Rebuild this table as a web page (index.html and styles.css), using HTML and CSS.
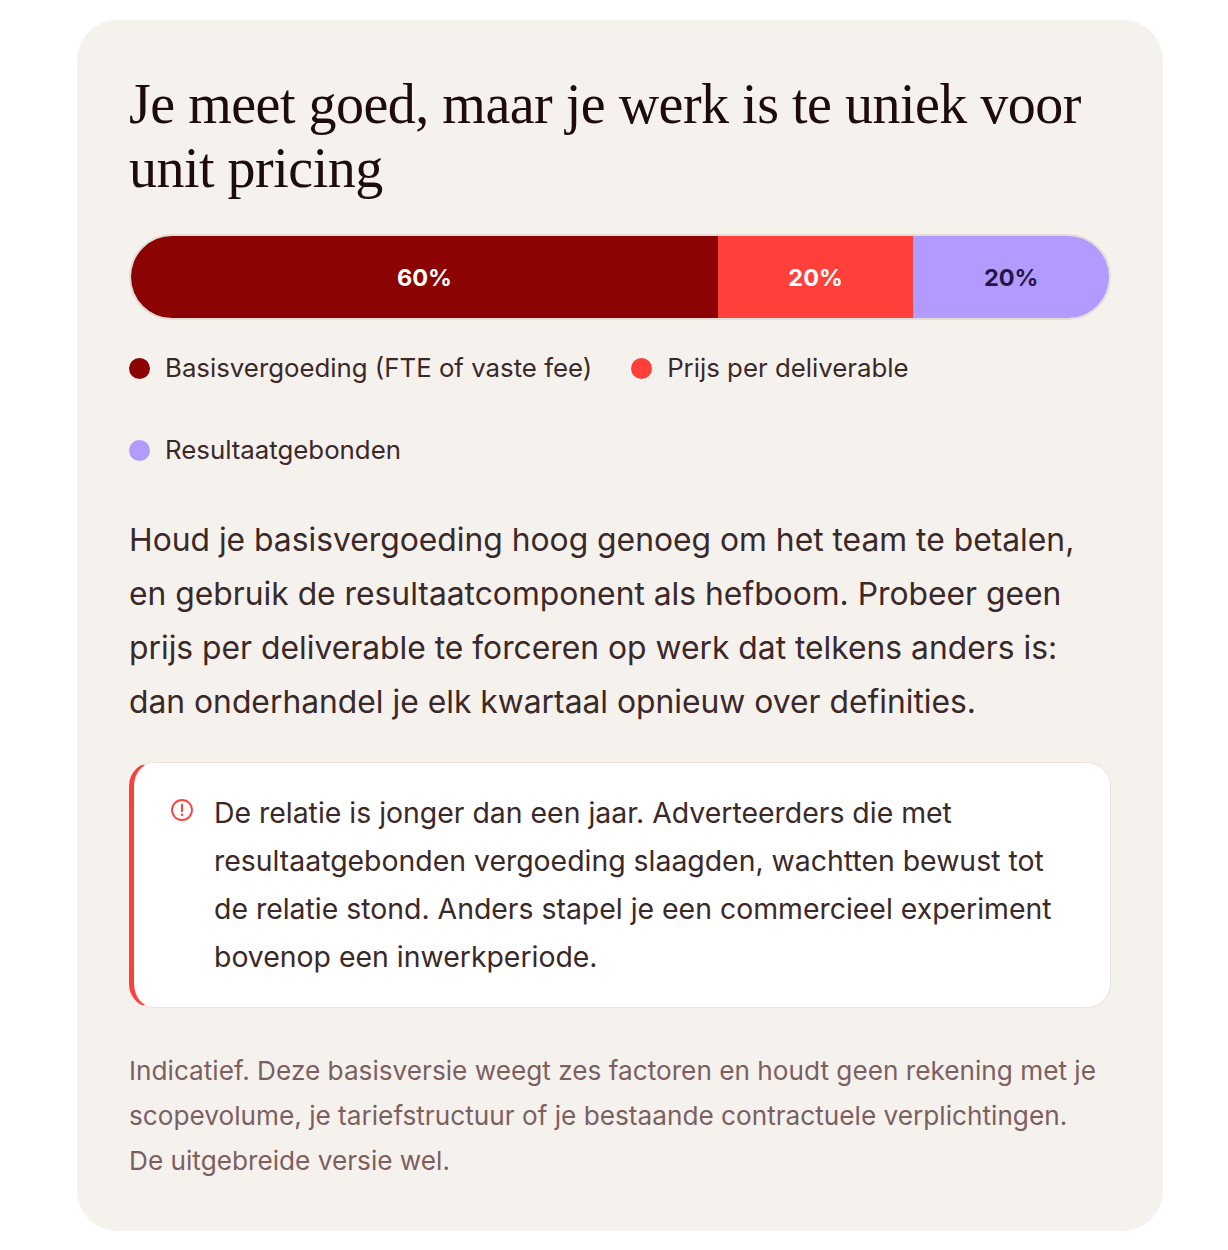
FILE: index.html
```html
<!DOCTYPE html>
<html lang="nl">
<head>
<meta charset="utf-8">
<title>Advies</title>
<link rel="stylesheet" href="styles.css">
</head>
<body>
<section class="card">
  <h1 class="title">Je meet goed, maar je werk is te uniek voor unit pricing</h1>
  <div class="bar">
    <div class="seg seg-base" style="width:60%">60%</div>
    <div class="seg seg-unit" style="width:20%">20%</div>
    <div class="seg seg-result" style="width:20%">20%</div>
  </div>
  <ul class="legend">
    <li class="legend-item"><span class="dot dot-base"></span>Basisvergoeding (FTE of vaste fee)</li>
    <li class="legend-item"><span class="dot dot-unit"></span>Prijs per deliverable</li>
    <li class="legend-item"><span class="dot dot-result"></span>Resultaatgebonden</li>
  </ul>
  <p class="advice">Houd je basisvergoeding hoog genoeg om het team te betalen, en gebruik de resultaatcomponent als hefboom. Probeer geen prijs per deliverable te forceren op werk dat telkens anders is: dan onderhandel je elk kwartaal opnieuw over definities.</p>
  <div class="callout">
    <svg class="callout-icon" viewBox="0 0 24 24" width="24" height="24" aria-hidden="true">
      <circle cx="12" cy="12" r="10" fill="none" stroke="#ff3f3a" stroke-width="1.8"/>
      <line x1="12" y1="6.8" x2="12" y2="13.2" stroke="#ff3f3a" stroke-width="2" stroke-linecap="round"/>
      <circle cx="12" cy="16.8" r="1.2" fill="#ff3f3a"/>
    </svg>
    <p class="callout-text">De relatie is jonger dan een jaar. Adverteerders die met resultaatgebonden vergoeding slaagden, wachtten bewust tot de relatie stond. Anders stapel je een commercieel experiment bovenop een inwerkperiode.</p>
  </div>
  <p class="footnote">Indicatief. Deze basisversie weegt zes factoren en houdt geen rekening met je scopevolume, je tariefstructuur of je bestaande contractuele verplichtingen. De uitgebreide versie wel.</p>
</section>
</body>
</html>
```
FILE: styles.css
```css
* { box-sizing: border-box; }
body {
  margin: 0;
  background: #ffffff;
  font-family: Inter, "Noto Sans", sans-serif;
  color: #3b2828;
}
.card {
  width: 1086px;
  margin: 20px 0 0 77px;
  background: #f5f2ee;
  border-radius: 40px;
  padding: 52px 52px 48px 52px;
}
.title {
  margin: 0;
  font-family: "Liberation Serif", "DejaVu Serif", serif;
  font-weight: 400;
  font-size: 56px;
  line-height: 64px;
  letter-spacing: -0.5px;
  color: #1e0b0d;
}
.bar {
  margin-top: 34px;
  height: 86px;
  display: flex;
  border: 2px solid #e4ddd6;
  border-radius: 43px;
  overflow: hidden;
}
.seg {
  display: flex;
  align-items: center;
  justify-content: center;
  font-weight: 700;
  font-size: 23.5px;
  color: #ffffff;
}
.seg-base { background: #8b0303; }
.seg-unit { background: #ff3f3a; }
.seg-result { background: #b39aff; color: #22164a; }
.legend {
  list-style: none;
  margin: 31px 0 0 0;
  padding: 0;
  display: flex;
  flex-wrap: wrap;
  column-gap: 39px;
  row-gap: 48px;
}
.legend-item {
  display: flex;
  align-items: center;
  gap: 15px;
  font-size: 25.8px;
  line-height: 34px;
  color: #3b2828;
}
.dot {
  width: 21px;
  height: 21px;
  border-radius: 50%;
  flex: none;
}
.dot-base { background: #8b0303; }
.dot-unit { background: #ff3f3a; }
.dot-result { background: #b39aff; }
.advice {
  margin: 46px 0 0 0;
  font-size: 31.8px;
  line-height: 54px;
  color: #3b2828;
}
.callout {
  margin-top: 33px;
  display: flex;
  align-items: flex-start;
  gap: 20px;
  background: #ffffff;
  border: 1px solid #e9e3dd;
  border-left: 5px solid #ff3f3a;
  border-radius: 24px;
  padding: 26px 40px 26px 36px;
}
.callout-icon {
  flex: none;
  margin-top: 9px;
}
.callout-text {
  margin: 0;
  font-size: 28.4px;
  line-height: 48px;
  color: #3b2828;
}
.footnote {
  margin: 40px 0 0 0;
  max-width: 975px;
  font-size: 26.2px;
  line-height: 45px;
  color: #7d5f5f;
}
```
